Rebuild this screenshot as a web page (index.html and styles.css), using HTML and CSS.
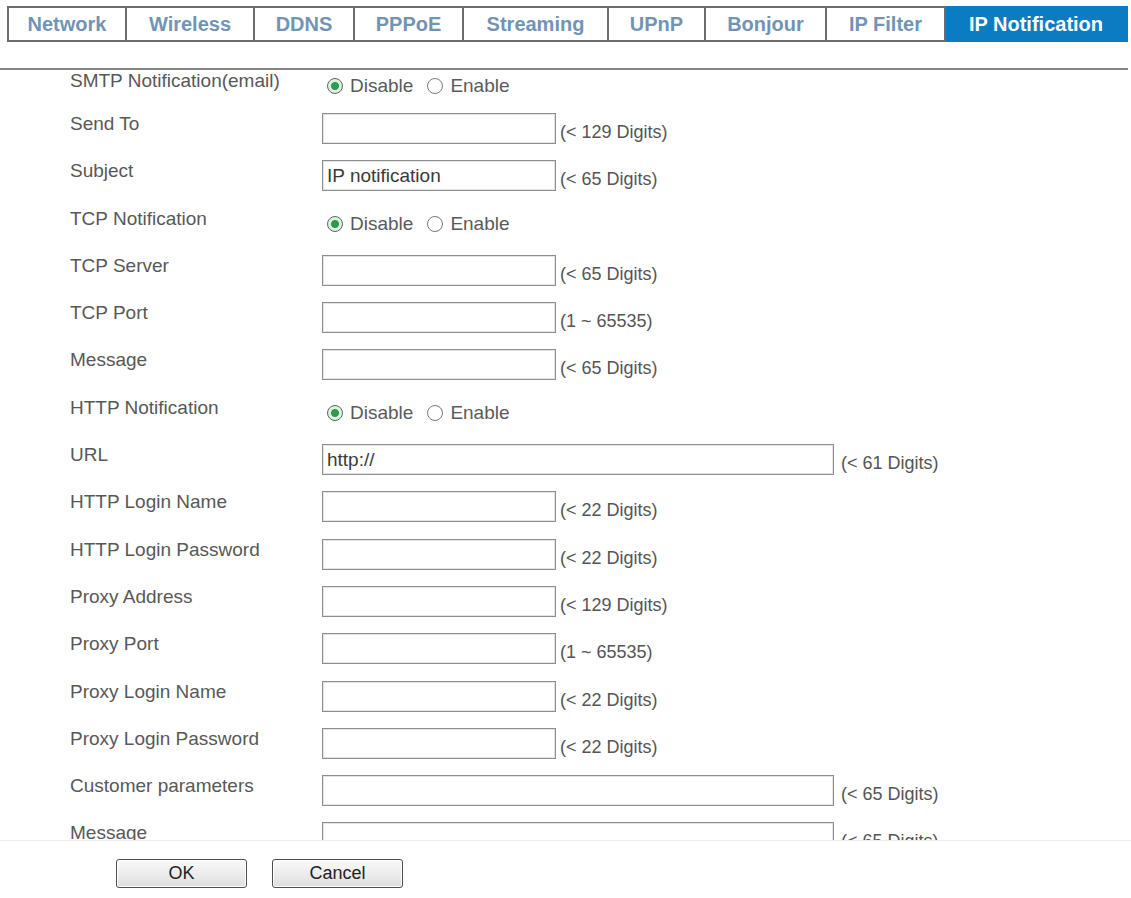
FILE: index.html
```html
<!DOCTYPE html>
<html lang="en">
<head>
    <meta charset="UTF-8">
    <title>IP Notification</title>
    <link rel="stylesheet" href="styles.css">
</head>
<body>
    <div class="tabs">
        <a class="tab tab-network" href="#">Network</a>
        <a class="tab tab-wireless" href="#">Wireless</a>
        <a class="tab tab-ddns" href="#">DDNS</a>
        <a class="tab tab-pppoe" href="#">PPPoE</a>
        <a class="tab tab-streaming" href="#">Streaming</a>
        <a class="tab tab-upnp" href="#">UPnP</a>
        <a class="tab tab-bonjour" href="#">Bonjour</a>
        <a class="tab tab-ipfilter" href="#">IP Filter</a>
        <a class="tab tab-ipnotify active" href="#">IP Notification</a>
    </div>
    <div class="rule"></div>

    <form class="settings">
        <div class="row first">
            <span class="label">SMTP Notification(email)</span>
            <div class="field radios">
                <label><input type="radio" name="smtp" checked> Disable</label>
                <label><input type="radio" name="smtp"> Enable</label>
            </div>
        </div>
        <div class="row">
            <span class="label">Send To</span>
            <div class="field"><input type="text" class="box"><span class="hint">(&lt; 129 Digits)</span></div>
        </div>
        <div class="row">
            <span class="label">Subject</span>
            <div class="field"><input type="text" class="box" value="IP notification"><span class="hint">(&lt; 65 Digits)</span></div>
        </div>
        <div class="row">
            <span class="label">TCP Notification</span>
            <div class="field radios">
                <label><input type="radio" name="tcp" checked> Disable</label>
                <label><input type="radio" name="tcp"> Enable</label>
            </div>
        </div>
        <div class="row">
            <span class="label">TCP Server</span>
            <div class="field"><input type="text" class="box"><span class="hint">(&lt; 65 Digits)</span></div>
        </div>
        <div class="row">
            <span class="label">TCP Port</span>
            <div class="field"><input type="text" class="box"><span class="hint">(1 ~ 65535)</span></div>
        </div>
        <div class="row">
            <span class="label">Message</span>
            <div class="field"><input type="text" class="box"><span class="hint">(&lt; 65 Digits)</span></div>
        </div>
        <div class="row">
            <span class="label">HTTP Notification</span>
            <div class="field radios">
                <label><input type="radio" name="http" checked> Disable</label>
                <label><input type="radio" name="http"> Enable</label>
            </div>
        </div>
        <div class="row">
            <span class="label">URL</span>
            <div class="field"><input type="text" class="box wide" value="http://"><span class="hint">(&lt; 61 Digits)</span></div>
        </div>
        <div class="row">
            <span class="label">HTTP Login Name</span>
            <div class="field"><input type="text" class="box"><span class="hint">(&lt; 22 Digits)</span></div>
        </div>
        <div class="row">
            <span class="label">HTTP Login Password</span>
            <div class="field"><input type="password" class="box"><span class="hint">(&lt; 22 Digits)</span></div>
        </div>
        <div class="row">
            <span class="label">Proxy Address</span>
            <div class="field"><input type="text" class="box"><span class="hint">(&lt; 129 Digits)</span></div>
        </div>
        <div class="row">
            <span class="label">Proxy Port</span>
            <div class="field"><input type="text" class="box"><span class="hint">(1 ~ 65535)</span></div>
        </div>
        <div class="row">
            <span class="label">Proxy Login Name</span>
            <div class="field"><input type="text" class="box"><span class="hint">(&lt; 22 Digits)</span></div>
        </div>
        <div class="row">
            <span class="label">Proxy Login Password</span>
            <div class="field"><input type="password" class="box"><span class="hint">(&lt; 22 Digits)</span></div>
        </div>
        <div class="row">
            <span class="label">Customer parameters</span>
            <div class="field"><input type="text" class="box wide"><span class="hint">(&lt; 65 Digits)</span></div>
        </div>
        <div class="row">
            <span class="label">Message</span>
            <div class="field"><input type="text" class="box wide"><span class="hint">(&lt; 65 Digits)</span></div>
        </div>
    </form>

    <div class="actions">
        <button type="button" class="btn">OK</button>
        <button type="button" class="btn">Cancel</button>
    </div>
</body>
</html>
```

FILE: styles.css
```css
body {
    margin: 0;
    background-color: #ffffff;
    font-family: "Liberation Sans", Arial, sans-serif;
    color: #5a5a5a;
}

/* top tab strip */
.tabs {
    display: flex;
    margin: 6px 0 0 7px;
    height: 36px;
}

.tab {
    box-sizing: border-box;
    display: flex;
    flex-shrink: 0;
    align-items: center;
    justify-content: center;
    border: 2px solid #6c6c6c;
    border-left: none;
    font-size: 20px;
    font-weight: bold;
    color: #7294b4;
    text-decoration: none;
    white-space: nowrap;
}

.tab:first-child {
    border-left: 2px solid #6c6c6c;
}

.tab-network   { width: 120px; }
.tab-wireless  { width: 128px; }
.tab-ddns      { width: 100px; }
.tab-pppoe     { width: 109px; }
.tab-streaming { width: 145px; }
.tab-upnp      { width: 97px; }
.tab-bonjour   { width: 121px; }
.tab-ipfilter  { width: 119px; }
.tab-ipnotify  { width: 182px; }

.tab.active {
    background-color: #0b7cc2;
    border-color: #0b7cc2;
    color: #ffffff;
}

.rule {
    margin-top: 26px;
    width: 1128px;
    height: 2px;
    background-color: #858585;
}

/* form area, clipped like a scrolling frame */
.settings {
    height: 770px;
    overflow: hidden;
    padding-left: 70px;
    border-bottom: 1px solid #ececec;
}

.row {
    display: flex;
    height: 47.3px;
}

.row.first {
    height: 43px;
}

.label {
    width: 252px;
    font-size: 19px;
    line-height: 22px;
    color: #585858;
}

.field {
    display: flex;
    align-items: center;
    height: 31px;
}

.box {
    box-sizing: border-box;
    width: 234px;
    height: 31px;
    margin: 0;
    padding: 0 4px;
    border: 1px solid #8e8e8e;
    box-shadow: inset 0 0 0 1px #e4e4e4;
    font-family: "Liberation Sans", Arial, sans-serif;
    font-size: 19px;
    color: #3a3a3a;
    background-color: #ffffff;
}

.box.wide {
    width: 512px;
}

.hint {
    margin-left: 4px;
    padding-top: 8px;
    font-size: 18px;
    color: #555555;
}

.box.wide + .hint {
    margin-left: 7px;
}

.radios {
    height: 32px;
    padding-left: 5px;
    gap: 14px;
    font-size: 19px;
    color: #5a5a5a;
}

.radios label {
    display: flex;
    align-items: center;
    gap: 7px;
}

.radios input {
    appearance: none;
    width: 16px;
    height: 16px;
    margin: 0;
    border: 1.5px solid #7a7a7a;
    border-radius: 50%;
    background-color: #ffffff;
}

.radios input:checked {
    border-color: #4f6f55;
    background: radial-gradient(circle, #2f9a4c 0 3.5px, #dff0e2 4.5px);
}

/* bottom buttons */
.actions {
    display: flex;
    gap: 25px;
    padding: 18px 0 0 116px;
}

.btn {
    width: 131px;
    height: 29px;
    border: 1px solid #4e4e4e;
    border-radius: 3px;
    background: linear-gradient(#fbfbfb, #dedede);
    box-shadow: inset 0 0 0 1px #ffffff;
    font-family: "Liberation Sans", Arial, sans-serif;
    font-size: 18px;
    color: #222222;
}
```
